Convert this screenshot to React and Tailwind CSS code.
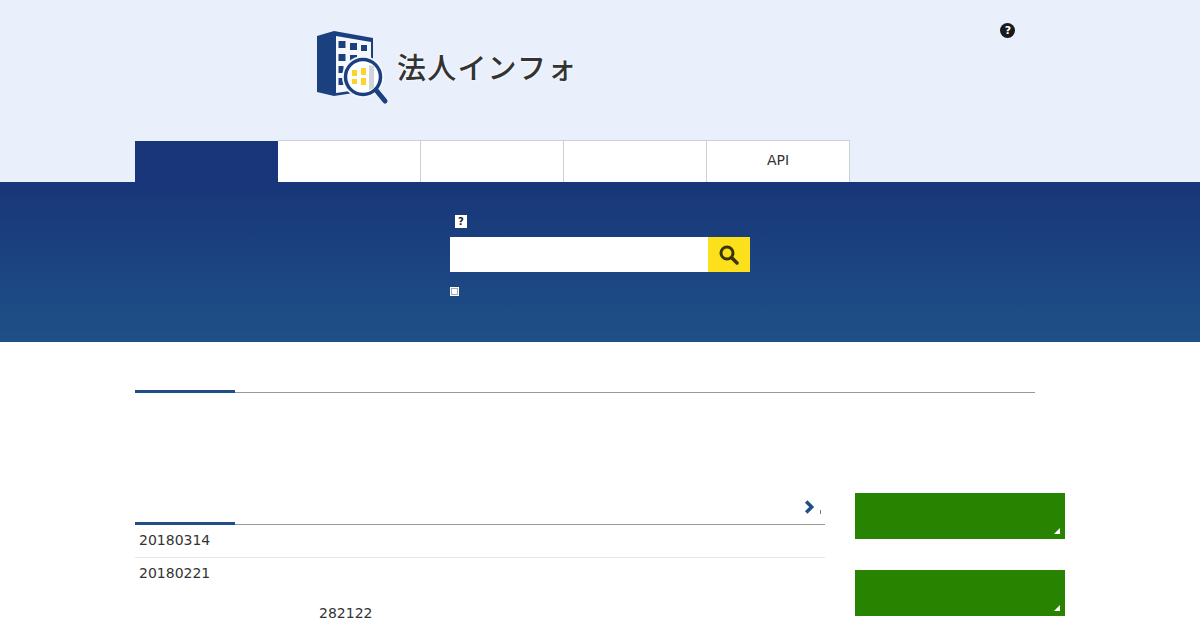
import React from "react";

const Logo = () => (
  <svg width="72" height="76" viewBox="0 0 72 76" className="shrink-0">
    <path d="M0 6 L17 1 L56 8 L56 60 L17 66 L0 62 Z" fill="#1b4080" />
    <path d="M19 6 L54 12 L54 58 L19 63 Z" fill="#f4f7fc" />
    <g fill="#1b4080">
      <path d="M21.500 11 h7 v7 h-7z" />
      <path d="M33 13 h7 v7 h-7z" />
      <path d="M44 15 h6 v6 h-6z" />
      <path d="M21.500 24 h7 v7 h-7z" />
      <path d="M33 25 h7 v6 h-7z" />
      <path d="M21.500 36 h5 v7 h-5z" />
      <path d="M21.500 48 h5 v7 h-5z" />
    </g>
    <circle cx="46" cy="47" r="21" fill="#f4f7fc" />
    <circle cx="46" cy="47" r="17" fill="#ffffff" />
    <path d="M52 35 L57 36 L57 58 L52 60 Z" fill="#cfd5de" />
    <g fill="#fbd52c">
      <path d="M35 40 h5 v6 h-5z" />
      <path d="M44 38 h5 v7 h-5z" />
      <path d="M35 49 h5 v5 h-5z" />
      <path d="M44 48 h5 v7 h-5z" />
    </g>
    <circle cx="46" cy="47" r="17.500" fill="none" stroke="#1b4080" strokeWidth="3.500" />
    <path d="M59 60 L68 71" stroke="#1b4080" strokeWidth="5" strokeLinecap="round" />
  </svg>
);

const NavTab = ({ label }) => (
  <li className="flex h-[42px] w-[143px] items-center justify-center border-t border-r border-[#ccd1d9] bg-white pb-[4px] text-sm text-[#333]">
    {label}
  </li>
);

const GreenAd = () => (
  <div className="relative h-[46px] w-[210px] bg-[#288400]">
    <span className="absolute bottom-[5px] right-[5px] h-0 w-0 border-b-[6px] border-l-[6px] border-b-white border-l-transparent" />
  </div>
);

export default function App() {
  return (
    <div className="h-[630px] w-[1200px] overflow-hidden bg-white font-['DejaVu_Sans',sans-serif] text-sm text-[#333]">
      <header className="h-[182px] bg-[#e9f0fb]">
        <div className="flex h-[140px] pl-[317px] pt-[30px]">
          <Logo />
          <div className="ml-[8px] mt-[14px] h-[44px] font-['Noto_Sans_CJK_JP',sans-serif] text-[29px] font-medium leading-[44px] tracking-[1.2px] text-[#333] [text-shadow:0_0_3px_#fff]">
            法人インフォ
          </div>
          <div className="ml-[423px] mt-[-7px] flex h-[15px] w-[15px] items-center justify-center rounded-full bg-[#1a1a1a] text-[11px] font-bold leading-none text-white">
            ?
          </div>
        </div>
        <ul className="ml-[135px] flex">
          <li className="mt-px h-[41px] w-[143px] bg-[#183679]" />
          <NavTab label="" />
          <NavTab label="" />
          <NavTab label="" />
          <NavTab label="API" />
        </ul>
      </header>

      <section className="h-[160px] bg-gradient-to-b from-[#183679] to-[#1f5087] pl-[450px] pt-[33px]">
        <div className="ml-[5px] flex h-[13px] w-[12px] items-center justify-center bg-white text-[10px] font-bold leading-none text-[#222]">
          ?
        </div>
        <div className="mt-[9px] flex h-[35px] w-[300px]">
          <div className="flex-1 bg-white" />
          <div className="flex w-[42px] items-center justify-center bg-[#fbe01b]">
            <svg width="20" height="20" viewBox="0 0 20 20" fill="none" stroke="#3a3508" strokeWidth="3" strokeLinecap="round">
              <circle cx="8" cy="8" r="6" />
              <path d="M13 13 L18 18" strokeWidth="3.500" />
            </svg>
          </div>
        </div>
        <div className="mt-[15px] flex h-[9px] w-[9px] items-center justify-center bg-white">
          <span className="h-[7px] w-[7px] border border-[#a4a9b2] bg-white" />
        </div>
      </section>

      <div className="mx-[135px] mt-[48px] h-[3px] w-[900px] border-b border-[#999]">
        <div className="h-[3px] w-[100px] bg-[#1f4f86]" />
      </div>

      <div className="mx-[135px] mt-[100px] flex">
        <main className="w-[690px]">
          <div className="relative h-[32px] border-b border-[#999]">
            <div className="absolute bottom-[-1px] left-0 h-[3px] w-[100px] bg-[#1f4f86]" />
            <svg width="12" height="14" viewBox="0 0 12 14" className="absolute right-[9px] top-[7px]">
              <path d="M2.200 1.500 L7.700 7 L2.200 12.500" fill="none" stroke="#1f4f86" strokeWidth="3.500" />
            </svg>
            <span className="absolute right-[4px] top-[17px] h-[4px] w-px bg-[#6b7f9c]" />
          </div>
          <div className="flex h-[33px] items-center border-b border-[#e5e5e5] pb-[2px] pl-1">20180314</div>
          <div className="flex h-[33px] items-center pb-[3px] pl-1">20180221</div>
          <div className="mt-[12px] pl-[184px] leading-[20px]">282122</div>
        </main>
        <aside className="ml-[30px] flex flex-col gap-[31px]">
          <GreenAd />
          <GreenAd />
        </aside>
      </div>
    </div>
  );
}
